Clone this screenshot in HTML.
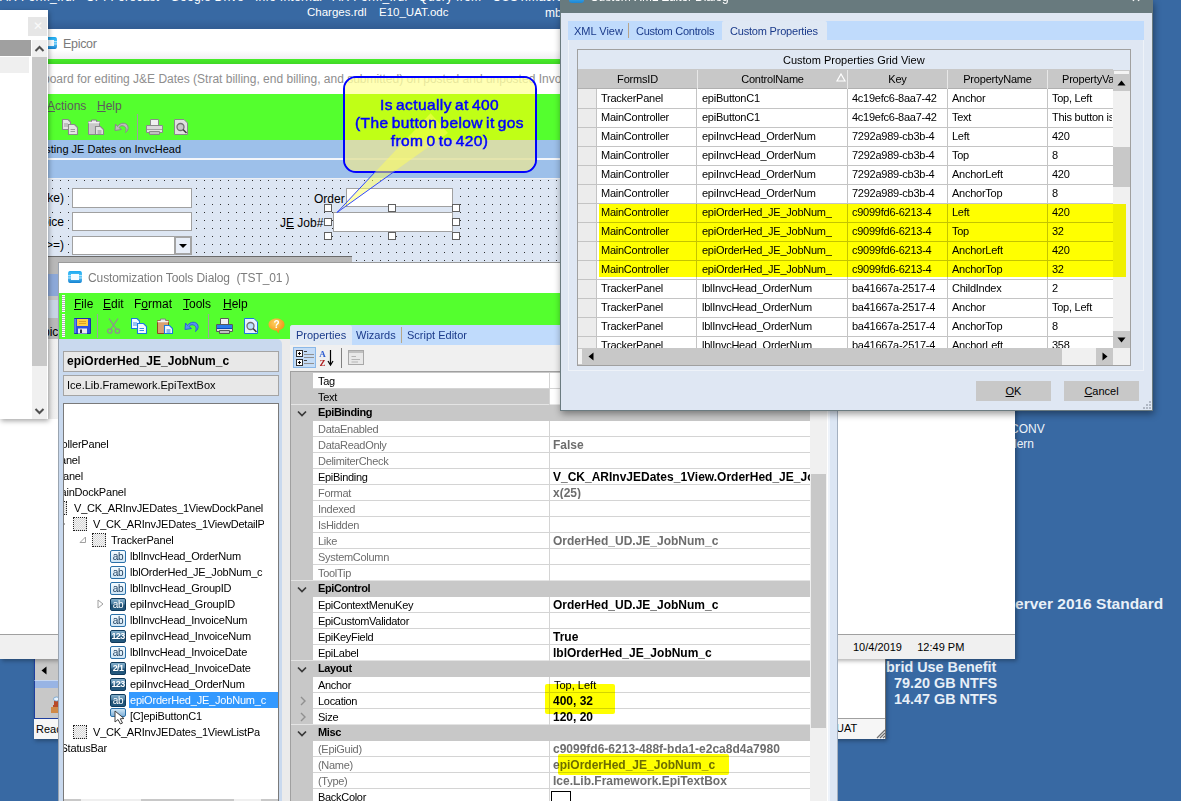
<!DOCTYPE html>
<html><head><meta charset="utf-8">
<style>
*{margin:0;padding:0;box-sizing:border-box}
html,body{width:1181px;height:801px;overflow:hidden}
body{background:#3869a3;font-family:"Liberation Sans",sans-serif;font-size:11px;color:#000;position:relative}
.a{position:absolute}
.t{position:absolute;white-space:nowrap;line-height:1}
.dots{background-image:radial-gradient(circle at 0.5px 0.5px,#303030 0.7px,transparent 0.8px);background-size:8px 8px}
</style></head><body>

<!-- desktop icon texts -->
<div class="t" style="left:0;top:-9px;color:#fff;font-size:12px;letter-spacing:0.3px">AR Form_.rdl &nbsp; CPI Forecast &nbsp; Google Drive &nbsp; Info Internal &nbsp; AR Form_.rdl &nbsp; Query from &nbsp; CUST.macro &nbsp; .mb</div>
<div class="t" style="left:307px;top:7px;color:#fff;font-size:11.5px">Charges.rdl</div>
<div class="t" style="left:379px;top:7px;color:#fff;font-size:11.5px">E10_UAT.odc</div>
<div class="t" style="left:545px;top:7px;color:#fff;font-size:12px">mb</div>

<!-- BGInfo text -->
<div class="t" style="left:1010px;top:423px;color:#eef4fa;font-size:12px">CONV</div>
<div class="t" style="left:1014px;top:438px;color:#eef4fa;font-size:12px">lern</div>
<div class="t" style="left:1004.7px;top:596px;color:#e8f0f8;font-size:15.5px;font-weight:bold">Server 2016 Standard</div>
<div class="t" style="left:867.6px;top:660px;color:#e8f0f8;font-size:14.4px;font-weight:bold">Hybrid Use Benefit</div>
<div class="t" style="left:894px;top:676px;color:#e8f0f8;font-size:14.4px;font-weight:bold">79.20 GB NTFS</div>
<div class="t" style="left:894px;top:692px;color:#e8f0f8;font-size:14.4px;font-weight:bold">14.47 GB NTFS</div>

<!-- window 2 (behind) -->
<div class="a" style="left:34px;top:600px;width:852px;height:139px;background:#fff;border:1px solid #888;box-shadow:1px 2px 4px rgba(0,0,0,.3)"></div>
<div class="a" style="left:34px;top:659px;width:24px;height:21px;background:#c8c8c8;border-left:1px solid #1f3f9f"></div><svg class="a" style="left:41px;top:666px" width="6" height="9"><path d="M5.5 0.5 V8.5 L0.5 4.5 Z" fill="#000"/></svg>
<div class="a" style="left:34px;top:680px;width:24px;height:8px;background:#98b4e4;border-left:1px solid #1f3f9f;border-top:1px solid #c8d8f0"></div>
<div class="a" style="left:34px;top:688px;width:24px;height:31px;background:#c8c8c8;border-left:1px solid #1f3f9f;border-bottom:1px solid #1f3f9f"></div><svg class="a" style="left:50px;top:694px" width="8" height="20"><path d="M4 4 L8 4 L8 18 L3 18 L3 11 L4 11 Z" fill="#b84a28"/><ellipse cx="6.5" cy="5" rx="3" ry="2" fill="#e8f4ff" stroke="#6aa0d0" stroke-width="0.8"/><path d="M1 13 H8 V19 H1 Z" fill="#d08a48"/></svg>
<div class="a" style="left:34px;top:719px;width:852px;height:20px;background:#f6f6f6"></div>
<div class="a" style="left:838px;top:718px;width:48px;height:1px;background:#a0a0a0"></div>
<div class="t" style="left:36px;top:724px;font-size:11px">Ready</div>
<div class="t" style="left:836px;top:723px;font-size:11px">UAT</div><svg class="a" style="left:875px;top:728px" width="11" height="11"><path d="M10 2 L2 10 M10 5 L5 10 M10 8 L8 10" stroke="#707070" stroke-width="1.2"/></svg><div class="a" style="left:885px;top:600px;width:1px;height:139px;background:#707070"></div>

<!-- big white window -->
<div class="a" style="left:0;top:300px;width:1015px;height:359px;background:#fff;box-shadow:2px 2px 4px rgba(0,0,0,.3)"></div>
<div class="a" style="left:0;top:634px;width:1015px;height:25px;background:#f0f0f0;border-top:1px solid #a0a0a0"></div>
<div class="t" style="left:853px;top:642px;font-size:11px">10/4/2019 &nbsp;&nbsp;&nbsp; 12:49 PM</div>

<!-- EPICOR WINDOW -->
<div class="a" style="left:40px;top:19px;width:980px;height:10px;background:linear-gradient(rgba(0,0,0,0),rgba(0,0,30,.12))"></div>
<div id="ew" class="a" style="left:0;top:0;width:1181px;height:801px;clip-path:inset(29px 166px 382px 35px)">
  <div class="a" style="left:35px;top:29px;width:1000px;height:390px;background:#fff"></div>
  
  <div class="a" style="left:35px;top:50px;width:1000px;height:9px;background:linear-gradient(#fff,#f0eef2)"></div>
  <svg class="a" style="left:42px;top:36px" width="16" height="14"><defs><linearGradient id="ig2" x1="0" y1="0" x2="0" y2="1"><stop offset="0" stop-color="#18a8f0"/><stop offset=".5" stop-color="#60c8f8"/><stop offset="1" stop-color="#1280d0"/></linearGradient></defs><path d="M3 1 H13 Q15 1 15 4 V10 Q15 13 13 13 H3 Q1 13 1 10 V4 Q1 1 3 1 Z" fill="url(#ig2)"/><rect x="4" y="4" width="8" height="6" fill="#f4fbff"/><path d="M1 5.5 H4 M1 8 H4 M12 5.5 H15 M12 8 H15" stroke="#c8ecff" stroke-width="0.8"/></svg>
  <div class="t" style="left:63px;top:38px;font-size:12.5px;color:#7a7a7a;letter-spacing:-0.3px">Epicor</div>
  <div class="a" style="left:35px;top:59px;width:1000px;height:5px;background:linear-gradient(#48ec2a,#40d826)"></div>
  <div class="t" style="left:43px;top:73px;font-size:12px;color:#8e8e8e">board for editing J&amp;E Dates (Strat billing, end billing, and submitted) on posted and unposted Invoices</div>
  <div class="a" style="left:35px;top:94px;width:1000px;height:46px;background:#54ff2e"></div>
  <div class="t" style="left:47px;top:100px;font-size:12px;color:#5c5c5c"><u>A</u>ctions</div><div class="t" style="left:97px;top:100px;font-size:12px;color:#5c5c5c"><u>H</u>elp</div>
  <div class="a" style="left:137px;top:114px;width:1px;height:26px;background:#a0a0a0"></div>
  <svg class="a" style="left:62px;top:119px" width="17" height="16"><g stroke="#8a8a8a" stroke-width="1.1" fill="#e4e4e4"><path d="M0.5 0.5 H6 L8.5 3 V10.5 H0.5 Z"/><path d="M6.5 5.5 H12.5 L15.5 8.5 V15.5 H6.5 Z"/></g><g stroke="#9a9a9a" stroke-width="1"><path d="M2 5 H6 M2 7 H6 M8.5 10.5 H13 M8.5 12.5 H13"/></g></svg><svg class="a" style="left:88px;top:119px" width="17" height="16"><path d="M0.5 2.5 H11.5 V15.5 H0.5 Z" fill="#c8c8c8" stroke="#8a8a8a" stroke-width="1"/><path d="M3.5 1 H8.5 V3.5 H3.5 Z" fill="#e8e8e8" stroke="#808080" stroke-width="1"/><path d="M0.5 3.5 H11.5" stroke="#f0f0f0" stroke-width="1.5"/><path d="M7.5 7.5 H12.5 L15.5 10.5 V15.5 H7.5 Z" fill="#e4e4e4" stroke="#8a8a8a" stroke-width="1.1"/><path d="M9.5 12 H13.5 M9.5 14 H13.5" stroke="#8a8a8a" stroke-width="1"/></svg><svg class="a" style="left:114px;top:119px" width="16" height="16"><path d="M3.5 7.5 C6 3.5 12 3 13.8 7 C15 10 13 12.5 11.5 13.5 C12.5 11 12.5 8 9.5 7 C7.5 6.3 6 7 5 8.5 L7.5 10.5 L1 11.5 L1.5 5 Z" fill="#bdbdbd" stroke="#8a8a8a" stroke-width="1"/></svg><svg class="a" style="left:146px;top:119px" width="17" height="16"><path d="M4.5 0.5 H12.5 V6.5 H4.5 Z" fill="#f0f0f0" stroke="#8a8a8a" stroke-width="1"/><path d="M0.5 6.5 H16.5 V13.5 H0.5 Z" fill="#e0e0e0" stroke="#8a8a8a" stroke-width="1"/><path d="M1 7 H16 V10 H1 Z" fill="#d8d8d8"/><path d="M1 10 H16 V11 H1 Z" fill="#a0a0a0"/><path d="M3.5 12.5 H13.5 V15.5 H3.5 Z" fill="#c0c0c0" stroke="#8a8a8a" stroke-width="1"/></svg><svg class="a" style="left:174px;top:119px" width="16" height="16"><path d="M0.5 0.5 H10 L13.5 4 V15.5 H0.5 Z" fill="#e0e0e0" stroke="#8a8a8a" stroke-width="1"/><circle cx="6.5" cy="8" r="3.5" fill="#c8c8c8" stroke="#707070" stroke-width="1.3"/><path d="M9 10.5 L12.5 14" stroke="#404040" stroke-width="1.6"/></svg><svg class="a" style="left:45px;top:119px" width="4" height="16"><path d="M2 2 V4 M2 11 V13" stroke="#8a8a8a" stroke-width="1.5"/></svg>
  <div class="a" style="left:35px;top:140px;width:1000px;height:18px;background:#9dc0ea"></div>
  <div class="a" style="left:0;top:0;width:1181px;height:801px;clip-path:inset(140px 0 640px 48px)"><div class="t" style="left:181px;top:144px;font-size:11px;color:#000;transform:translateX(-100%)">For testing JE Dates on InvcHead</div></div>
  <div class="a" style="left:35px;top:158px;width:1000px;height:2px;background:#f4f6fa"></div>
  <div class="a" style="left:35px;top:160px;width:1000px;height:18px;background:#9dc0ea"></div>
  <div class="a dots" style="left:35px;top:178px;width:1000px;height:100px;background-color:#dde6f3;background-position:1px 2px"></div><div class="a" style="left:35px;top:178px;width:1000px;height:1px;background:#eef0f4"></div>
  <div class="t" style="left:65px;top:191px;font-size:12px;background:#dde6f3;padding:1px 1px 2px 0;transform:translateX(-100%)">Make)</div>
  <div class="t" style="left:65px;top:215px;font-size:12px;background:#dde6f3;padding:1px 1px 2px 0;transform:translateX(-100%)">Invoice</div>
  <div class="t" style="left:65px;top:238px;font-size:12px;background:#dde6f3;padding:1px 1px 2px 0;transform:translateX(-100%)">(&gt;=)</div>
  <div class="a" style="left:72px;top:188px;width:120px;height:20px;background:#fff;border:1px solid #a0a0a0"></div>
  <div class="a" style="left:72px;top:212px;width:120px;height:19px;background:#fff;border:1px solid #a0a0a0"></div>
  <div class="a" style="left:72px;top:236px;width:120px;height:19px;background:#fff;border:1px solid #a0a0a0"></div>
  <div class="a" style="left:174px;top:236px;width:18px;height:19px;background:#e8eef8;border:2px solid #a4a4a4"></div>
  <div class="a" style="left:179px;top:244px;width:0;height:0;border-left:4px solid transparent;border-right:4px solid transparent;border-top:4px solid #000"></div>
  <div class="t" style="left:313px;top:192px;font-size:12px;background:#dde6f3;padding:1px 2px 2px 1px">Order</div>
  <div class="t" style="left:279px;top:216px;font-size:12px;background:#dde6f3;padding:1px 2px 2px 1px">J<u>E</u> Job#</div>
  <div class="a" style="left:346px;top:188px;width:107px;height:19px;background:#fff;border:1px solid #a0a0a0"></div>
  <div class="a" style="left:333px;top:212px;width:120px;height:20px;background:#fff;border:1px solid #a0a0a0"></div>
  <div class="a" style="left:324px;top:204px;width:8px;height:8px;background:#fff;border:1px solid #606060"></div><div class="a" style="left:388px;top:204px;width:8px;height:8px;background:#fff;border:1px solid #606060"></div><div class="a" style="left:452px;top:204px;width:8px;height:8px;background:#fff;border:1px solid #606060"></div><div class="a" style="left:324px;top:218px;width:8px;height:8px;background:#fff;border:1px solid #606060"></div><div class="a" style="left:452px;top:218px;width:8px;height:8px;background:#fff;border:1px solid #606060"></div><div class="a" style="left:324px;top:232px;width:8px;height:8px;background:#fff;border:1px solid #606060"></div><div class="a" style="left:388px;top:232px;width:8px;height:8px;background:#fff;border:1px solid #606060"></div><div class="a" style="left:452px;top:232px;width:8px;height:8px;background:#fff;border:1px solid #606060"></div>
  <div class="a" style="left:48px;top:256px;width:304px;height:40px;background:#b8b8b8;border-top:1px solid #6a6a6a"></div>
  <div class="t" style="left:88px;top:261px;font-size:12px;color:#000">This button is 420 wide</div>
  <div class="a" style="left:35px;top:274px;width:23px;height:22px;background:#8ca8d8"></div>
  <div class="a" style="left:35px;top:296px;width:23px;height:4px;background:#c4c4c4"></div>
  <div class="a" style="left:35px;top:300px;width:23px;height:18px;background:#c8d4e4"></div>
  <div class="a" style="left:35px;top:318px;width:23px;height:21px;background:#b8b8b8"></div>
  <div class="t" style="left:35px;top:326px;font-size:12px">Epic</div>
  <div class="a" style="left:35px;top:339px;width:23px;height:80px;background:linear-gradient(90deg,#dcdcdc,#f2f2f2)"></div>
</div>

<!-- LEFT WINDOW -->
<div id="lw" class="a" style="left:0;top:10px;width:48px;height:409px;background:#fff;box-shadow:1px 2px 5px rgba(0,0,0,.35)">
  <div class="a" style="left:28px;top:7px;width:19px;height:19px;background:#e6e6e6;color:#fafafa;font-size:12px;text-align:center;line-height:19px">&#x2715;</div>
  <div class="a" style="left:0;top:30px;width:31px;height:16px;background:#a0a0a0"></div>
  <div class="a" style="left:0;top:47px;width:29px;height:16px;background:#efefef"></div>
  <div class="a" style="left:32px;top:30px;width:15px;height:17px;background:#f0f0f0"></div>
  <svg class="a" style="left:34px;top:34px" width="11" height="10"><path d="M1.5 7 L5.5 3 L9.5 7" stroke="#505050" stroke-width="2" fill="none"/></svg>
  <div class="a" style="left:32px;top:47px;width:15px;height:309px;background:#c8c8c8"></div>
  <div class="a" style="left:32px;top:356px;width:15px;height:53px;background:#f0f0f0"></div>
  <svg class="a" style="left:34px;top:396px" width="11" height="10"><path d="M1.5 3 L5.5 7 L9.5 3" stroke="#505050" stroke-width="2" fill="none"/></svg>
</div>

<!-- CUSTOMIZATION TOOLS DIALOG -->
<div id="ctd" class="a" style="left:0;top:0;width:1181px;height:801px;clip-path:inset(262px 343px 0 58px)">
  <div class="a" style="left:58px;top:262px;width:770px;height:539px;background:#ebebeb;border-left:1px solid #9aa4b0;border-right:1px solid #8a96a4"></div><div class="a" style="left:827px;top:262px;width:1px;height:539px;background:#7a848e"></div><div class="a" style="left:828px;top:262px;width:10px;height:539px;background:#dce6f4;border-left:2px solid #eef3fa;border-right:1px solid #a4b0c0"></div>
  <div class="a" style="left:58px;top:262px;width:780px;height:1px;background:#9a9a9a"></div><div class="a" style="left:59px;top:263px;width:769px;height:30px;background:#fff"></div>
  <svg class="a" style="left:67px;top:270px" width="16" height="14"><defs><linearGradient id="ig" x1="0" y1="0" x2="0" y2="1"><stop offset="0" stop-color="#18a8f0"/><stop offset=".5" stop-color="#60c8f8"/><stop offset="1" stop-color="#1280d0"/></linearGradient></defs><path d="M3 1 H13 Q15 1 15 4 V10 Q15 13 13 13 H3 Q1 13 1 10 V4 Q1 1 3 1 Z" fill="url(#ig)"/><rect x="4" y="4" width="8" height="6" fill="#f4fbff"/><path d="M1 5.5 H4 M1 8 H4 M12 5.5 H15 M12 8 H15" stroke="#c8ecff" stroke-width="0.8"/></svg>
  <div class="t" style="left:88px;top:272px;font-size:12px;color:#7c7c7c;letter-spacing:-0.1px">Customization Tools Dialog &nbsp;(TST_01 )</div>
  <div class="a" style="left:59px;top:293px;width:769px;height:46px;background:#54ff2e"></div>
  <div class="a" style="left:62px;top:295px;width:3px;height:17px;background:repeating-linear-gradient(#fff 0 1px,#b0b0b0 1px 2px)"></div>
  <div class="a" style="left:62px;top:314px;width:3px;height:23px;background:repeating-linear-gradient(#fff 0 1px,#b0b0b0 1px 2px)"></div>
  <div class="t" style="left:74px;top:298px;font-size:12px;color:#000"><u>F</u>ile</div>
  <div class="t" style="left:103px;top:298px;font-size:12px;color:#000"><u>E</u>dit</div>
  <div class="t" style="left:134px;top:298px;font-size:12px;color:#000">F<u>o</u>rmat</div>
  <div class="t" style="left:183px;top:298px;font-size:12px;color:#000"><u>T</u>ools</div>
  <div class="t" style="left:223px;top:298px;font-size:12px;color:#000"><u>H</u>elp</div>
  <div class="a" style="left:97px;top:314px;width:1px;height:24px;background:#a0a0a0"></div>
  <div class="a" style="left:208px;top:314px;width:1px;height:24px;background:#a0a0a0"></div>
  <svg class="a" style="left:74px;top:318px" width="17" height="16"><path d="M0.5 0.5 H16.5 V15.5 H0.5 Z" fill="#2a50e0" stroke="#1a30b0" stroke-width="1"/><path d="M3 1 H14 V8 H3 Z" fill="#ffd040"/><path d="M5 3.5 H12 M5 5.5 H12" stroke="#e0a020" stroke-width="1"/><path d="M4 10.5 H13 V15.5 H4 Z" fill="#e8e8f0"/><path d="M6 11.5 H8 V15 H6 Z" fill="#303050"/><path d="M1 1 V15" stroke="#8ab0ff" stroke-width="1"/></svg><svg class="a" style="left:107px;top:318px" width="14" height="16"><g stroke="#909090" stroke-width="1.3" fill="none"><path d="M2 0.5 L9.5 11.5 M11 0.5 L3.5 11.5"/><circle cx="2.8" cy="13" r="2.2"/><circle cx="10.4" cy="13" r="2.2"/></g></svg><svg class="a" style="left:131px;top:318px" width="17" height="16"><g stroke="#1a78e0" stroke-width="1.1" fill="#f4f9ff"><path d="M0.5 0.5 H6 L8.5 3 V10.5 H0.5 Z"/><path d="M6.5 5.5 H12.5 L15.5 8.5 V15.5 H6.5 Z"/></g><g stroke="#3a8ae8" stroke-width="1"><path d="M2 5 H6 M2 7 H6 M8.5 10.5 H13 M8.5 12.5 H13"/></g></svg><svg class="a" style="left:157px;top:318px" width="17" height="16"><path d="M0.5 2.5 H11.5 V15.5 H0.5 Z" fill="#d8a070" stroke="#8a4a20" stroke-width="1"/><path d="M3.5 1 H8.5 V3.5 H3.5 Z" fill="#e8e8e8" stroke="#808080" stroke-width="1"/><path d="M0.5 3.5 H11.5" stroke="#f0f0f0" stroke-width="1.5"/><path d="M7.5 7.5 H12.5 L15.5 10.5 V15.5 H7.5 Z" fill="#f4f9ff" stroke="#1a78e0" stroke-width="1.1"/><path d="M9.5 12 H13.5 M9.5 14 H13.5" stroke="#1a78e0" stroke-width="1"/></svg><svg class="a" style="left:184px;top:318px" width="16" height="16"><path d="M3.5 7.5 C6 3.5 12 3 13.8 7 C15 10 13 12.5 11.5 13.5 C12.5 11 12.5 8 9.5 7 C7.5 6.3 6 7 5 8.5 L7.5 10.5 L1 11.5 L1.5 5 Z" fill="#5a90f0" stroke="#2a60d8" stroke-width="1"/></svg><svg class="a" style="left:216px;top:318px" width="17" height="16"><path d="M4.5 0.5 H12.5 V6.5 H4.5 Z" fill="#f0f0f0" stroke="#5a5a5a" stroke-width="1"/><path d="M0.5 6.5 H16.5 V13.5 H0.5 Z" fill="#e0e0e0" stroke="#5a5a5a" stroke-width="1"/><path d="M1 7 H16 V10 H1 Z" fill="#2a7ae8"/><path d="M1 10 H16 V11 H1 Z" fill="#0a4ab8"/><path d="M3.5 12.5 H13.5 V15.5 H3.5 Z" fill="#c0c0c0" stroke="#5a5a5a" stroke-width="1"/></svg><svg class="a" style="left:244px;top:318px" width="16" height="16"><path d="M0.5 0.5 H10 L13.5 4 V15.5 H0.5 Z" fill="#e6f2ff" stroke="#1a78e0" stroke-width="1"/><circle cx="6.5" cy="8" r="3.5" fill="#bde0ff" stroke="#707070" stroke-width="1.3"/><path d="M9 10.5 L12.5 14" stroke="#404040" stroke-width="1.6"/></svg><svg class="a" style="left:268px;top:318px" width="17" height="16"><defs><radialGradient id="hg" cx="40%" cy="30%" r="70%"><stop offset="0" stop-color="#ffd060"/><stop offset="1" stop-color="#f09010"/></radialGradient></defs><path d="M8.5 0.5 C13 0.5 16.5 3 16.5 6.5 C16.5 9.5 14 11.5 11.5 12 L10.5 15.5 L8.5 12.5 C4 12.5 0.5 10 0.5 6.5 C0.5 3 4 0.5 8.5 0.5 Z" fill="url(#hg)"/><text x="8.5" y="10" font-family="Liberation Sans" font-weight="bold" font-size="10" fill="#fff" text-anchor="middle">?</text></svg>
  <!-- left panel -->
  <div class="a" style="left:59px;top:339px;width:223px;height:462px;background:#c9d9ee;border-top-right-radius:5px"></div>
  <div class="a" style="left:63px;top:351px;width:216px;height:21px;background:#e8e8e8;border:1px solid #a4a4a4"></div>
  <div class="t" style="left:67px;top:355px;font-size:12px;font-weight:bold">epiOrderHed_JE_JobNum_c</div>
  <div class="a" style="left:63px;top:375px;width:216px;height:21px;background:#e8e8e8;border:1px solid #a4a4a4"></div>
  <div class="t" style="left:67px;top:380px;font-size:11px">Ice.Lib.Framework.EpiTextBox</div>
  <div class="a" style="left:63px;top:403px;width:216px;height:400px;background:#fff;border:1px solid #7a7a7a"></div>
  <div id="tree" class="a" style="left:0;top:0;width:1181px;height:801px;clip-path:inset(404px 903px 2px 64px)">
  <div class="t" style="left:108.5px;top:439px;font-size:11px;letter-spacing:-0.2px;color:#000;transform:translateX(-100%)">CustomizationControllerPanel</div><div class="t" style="left:80px;top:455px;font-size:11px;letter-spacing:-0.2px;color:#000;transform:translateX(-100%)">MainPanel</div><div class="t" style="left:83px;top:471px;font-size:11px;letter-spacing:-0.2px;color:#000;transform:translateX(-100%)">TopPanel</div><div class="t" style="left:126px;top:487px;font-size:11px;letter-spacing:-0.2px;color:#000;transform:translateX(-100%)">MainDockPanel</div><div class="a" style="left:53px;top:501px;width:14px;height:14px;border:1px dotted #202020;background:repeating-conic-gradient(#d8d8d8 0 25%,#f4f4f4 0 50%) 0 0/2px 2px"></div><div class="t" style="left:74px;top:503px;font-size:11px;letter-spacing:-0.2px;color:#000">V_CK_ARInvJEDates_1ViewDockPanel</div><div class="a" style="left:73px;top:517px;width:14px;height:14px;border:1px dotted #202020;background:repeating-conic-gradient(#d8d8d8 0 25%,#f4f4f4 0 50%) 0 0/2px 2px"></div><div class="t" style="left:93px;top:519px;font-size:11px;letter-spacing:-0.2px;color:#000;width:171px;overflow:hidden">V_CK_ARInvJEDates_1ViewDetailPanel</div><div class="a" style="left:92px;top:533px;width:14px;height:14px;border:1px dotted #202020;background:repeating-conic-gradient(#d8d8d8 0 25%,#f4f4f4 0 50%) 0 0/2px 2px"></div><div class="t" style="left:111px;top:535px;font-size:11px;letter-spacing:-0.2px;color:#000">TrackerPanel</div><div class="a" style="left:110px;top:550px;width:16px;height:13px;border:1px solid #2a70a8;border-radius:2px;background:linear-gradient(#f4fbff,#cfe6f6);color:#1a3a5a;font-size:10px;line-height:11px;text-align:center;letter-spacing:-0.3px">ab</div><div class="t" style="left:130px;top:551px;font-size:11px;letter-spacing:-0.2px;color:#000">lblInvcHead_OrderNum</div><div class="a" style="left:110px;top:566px;width:16px;height:13px;border:1px solid #2a70a8;border-radius:2px;background:linear-gradient(#f4fbff,#cfe6f6);color:#1a3a5a;font-size:10px;line-height:11px;text-align:center;letter-spacing:-0.3px">ab</div><div class="t" style="left:130px;top:567px;font-size:11px;letter-spacing:-0.2px;color:#000">lblOrderHed_JE_JobNum_c</div><div class="a" style="left:110px;top:582px;width:16px;height:13px;border:1px solid #2a70a8;border-radius:2px;background:linear-gradient(#f4fbff,#cfe6f6);color:#1a3a5a;font-size:10px;line-height:11px;text-align:center;letter-spacing:-0.3px">ab</div><div class="t" style="left:130px;top:583px;font-size:11px;letter-spacing:-0.2px;color:#000">lblInvcHead_GroupID</div><div class="a" style="left:110px;top:598px;width:16px;height:13px;border:1px solid #0e3a5c;border-radius:2px;background:linear-gradient(#84b0cc,#4a7ca0 45%,#1e4e70 55%,#245a80);color:#fff;font-size:10px;line-height:11px;text-align:center;letter-spacing:-0.3px">ab</div><div class="t" style="left:130px;top:599px;font-size:11px;letter-spacing:-0.2px;color:#000">epiInvcHead_GroupID</div><div class="a" style="left:110px;top:614px;width:16px;height:13px;border:1px solid #2a70a8;border-radius:2px;background:linear-gradient(#f4fbff,#cfe6f6);color:#1a3a5a;font-size:10px;line-height:11px;text-align:center;letter-spacing:-0.3px">ab</div><div class="t" style="left:130px;top:615px;font-size:11px;letter-spacing:-0.2px;color:#000">lblInvcHead_InvoiceNum</div><div class="a" style="left:110px;top:630px;width:16px;height:13px;border:1px solid #0e3a5c;border-radius:2px;background:linear-gradient(#84b0cc,#4a7ca0 45%,#1e4e70 55%,#245a80);color:#fff;font-size:9px;font-weight:bold;line-height:11px;text-align:center;letter-spacing:-0.6px">123</div><div class="t" style="left:130px;top:631px;font-size:11px;letter-spacing:-0.2px;color:#000">epiInvcHead_InvoiceNum</div><div class="a" style="left:110px;top:646px;width:16px;height:13px;border:1px solid #2a70a8;border-radius:2px;background:linear-gradient(#f4fbff,#cfe6f6);color:#1a3a5a;font-size:10px;line-height:11px;text-align:center;letter-spacing:-0.3px">ab</div><div class="t" style="left:130px;top:647px;font-size:11px;letter-spacing:-0.2px;color:#000">lblInvcHead_InvoiceDate</div><div class="a" style="left:110px;top:662px;width:16px;height:13px;border:1px solid #0e3a5c;border-radius:2px;background:linear-gradient(#84b0cc,#4a7ca0 45%,#1e4e70 55%,#245a80);color:#fff;font-size:9px;font-weight:bold;line-height:11px;text-align:center;letter-spacing:-0.6px">2/1</div><div class="t" style="left:130px;top:663px;font-size:11px;letter-spacing:-0.2px;color:#000">epiInvcHead_InvoiceDate</div><div class="a" style="left:110px;top:678px;width:16px;height:13px;border:1px solid #0e3a5c;border-radius:2px;background:linear-gradient(#84b0cc,#4a7ca0 45%,#1e4e70 55%,#245a80);color:#fff;font-size:9px;font-weight:bold;line-height:11px;text-align:center;letter-spacing:-0.6px">123</div><div class="t" style="left:130px;top:679px;font-size:11px;letter-spacing:-0.2px;color:#000">epiInvcHead_OrderNum</div><div class="a" style="left:129px;top:692px;width:150px;height:16px;background:#3399ff"></div><div class="a" style="left:110px;top:694px;width:16px;height:13px;border:1px solid #0e3a5c;border-radius:2px;background:linear-gradient(#84b0cc,#4a7ca0 45%,#1e4e70 55%,#245a80);color:#fff;font-size:10px;line-height:11px;text-align:center;letter-spacing:-0.3px">ab</div><div class="t" style="left:130px;top:695px;font-size:11px;letter-spacing:-0.2px;color:#fff">epiOrderHed_JE_JobNum_c</div><div class="a" style="left:110px;top:708px;width:16px;height:9px;border:1px solid #2a70a8;border-radius:2px;background:linear-gradient(#cfe6f6,#7fb0d8)"></div><svg class="a" style="left:114px;top:710px" width="14" height="15"><path d="M1 1 L1 12 L4 9.5 L6.5 14 L8.5 13 L6.3 8.8 L10 8.5 Z" fill="#fff" stroke="#404040" stroke-width="1"/></svg><div class="t" style="left:130px;top:711px;font-size:11px;letter-spacing:-0.2px;color:#000">[C]epiButtonC1</div><div class="a" style="left:73px;top:725px;width:14px;height:14px;border:1px dotted #202020;background:repeating-conic-gradient(#d8d8d8 0 25%,#f4f4f4 0 50%) 0 0/2px 2px"></div><div class="t" style="left:93px;top:727px;font-size:11px;letter-spacing:-0.2px;color:#000;width:167px;overflow:hidden">V_CK_ARInvJEDates_1ViewListPanel</div><div class="t" style="left:107px;top:743px;font-size:11px;letter-spacing:-0.2px;color:#000;transform:translateX(-100%)">StatusBar</div><svg class="a" style="left:60px;top:520px" width="8" height="8"><path d="M1 1 L1 7 L5 4 Z" fill="none" stroke="#a0a0a0"/></svg><svg class="a" style="left:79px;top:536px" width="8" height="8"><path d="M6.5 1 L6.5 6.5 L1 6.5 Z" fill="none" stroke="#a0a0a0"/></svg><svg class="a" style="left:97px;top:599px" width="8" height="10"><path d="M1 1 L1 9 L6 5 Z" fill="none" stroke="#a0a0a0"/></svg>
  </div>
  <div class="a" style="left:64px;top:799px;width:214px;height:2px;background:#c8c8c8"></div><div class="a" style="left:81px;top:799px;width:60px;height:2px;background:#efefef"></div><div class="a" style="left:234px;top:799px;width:27px;height:2px;background:#efefef"></div>
  <!-- right: tabs -->
  <div class="a" style="left:290px;top:325px;width:538px;height:20px;background:#c0dbfc;border-top-left-radius:3px"></div>
  <div class="a" style="left:290px;top:325px;width:62px;height:20px;background:#dfe9f5;border-top-left-radius:3px;border-top-right-radius:3px"></div>
  <div class="t" style="left:296px;top:330px;font-size:11px;color:#1a3a8a">Properties</div>
  <div class="t" style="left:356px;top:330px;font-size:11px;color:#1a3a8a">Wizards</div>
  <div class="a" style="left:401px;top:327px;width:1px;height:16px;background:#b8a888"></div>
  <div class="t" style="left:407px;top:330px;font-size:11px;color:#1a3a8a">Script Editor</div>
  <div class="a" style="left:290px;top:345px;width:538px;height:26px;background:#f0f0f0"></div>
  <div class="a" style="left:293px;top:347px;width:23px;height:21px;background:#c4dcf6;border:1px solid #8ab8e8"></div><svg class="a" style="left:295px;top:349px" width="20" height="18"><g fill="#fff" stroke="#303030" stroke-width="1"><rect x="1.5" y="1.5" width="6" height="6"/><rect x="1.5" y="10.5" width="6" height="6"/></g><path d="M3 4.5 H6 M4.5 3 V6 M3 13.5 H6 M4.5 12 V15" stroke="#000" stroke-width="1"/><g stroke="#909090" stroke-width="1"><path d="M9 2.5 H12 M9 5.5 H19 M9 8.5 H19 M9 11.5 H12 M9 14.5 H19"/></g><path d="M9 2.5 H12 M9 11.5 H12" stroke="#404040" stroke-width="1"/></svg>
  <svg class="a" style="left:318px;top:349px" width="18" height="18"><text x="4.5" y="8" font-family="Liberation Serif" font-weight="bold" font-size="9" fill="#2a5ad0" text-anchor="middle">A</text><text x="4.5" y="16.5" font-family="Liberation Serif" font-weight="bold" font-size="9" fill="#b02020" text-anchor="middle">Z</text><path d="M12.5 1 V15" stroke="#000" stroke-width="1.2"/><path d="M10 12 L12.5 16 L15 12" stroke="#000" stroke-width="1.2" fill="none"/></svg>
  <div class="a" style="left:341px;top:348px;width:1px;height:20px;background:#808080"></div>
  <svg class="a" style="left:348px;top:350px" width="17" height="16"><rect x="0.5" y="0.5" width="15" height="14" fill="#e8e8e8" stroke="#a8a8a8"/><rect x="1" y="1" width="14" height="2" fill="#c0c0c0"/><path d="M3.5 6.5 H8 M3.5 9.5 H12 M3.5 12 H10" stroke="#b4b4b4"/></svg>
  <!-- property grid -->
<!--PG-->
<div class="a" style="left:290px;top:371px;width:538px;height:430px;background:#fff"></div><div class="a" style="left:290px;top:371px;width:520px;height:1px;background:#a0a0a0"></div><div class="a" style="left:290px;top:371px;width:1px;height:430px;background:#a0a0a0"></div><div class="a" style="left:291px;top:372px;width:22px;height:429px;background:#c8c8c8"></div><div class="a" style="left:313px;top:372px;width:497px;height:1px;background:#c8c8c8"></div><div class="a" style="left:313px;top:373px;width:236px;height:15px;background:#fff"></div><div class="a" style="left:313px;top:388px;width:497px;height:1px;background:#d4d4d4"></div><div class="t" style="left:318px;top:376px;font-size:11px;color:#000;letter-spacing:-0.3px">Tag</div><div class="a" style="left:313px;top:389px;width:236px;height:15px;background:#c8c8c8"></div><div class="a" style="left:313px;top:404px;width:497px;height:1px;background:#d4d4d4"></div><div class="t" style="left:318px;top:392px;font-size:11px;color:#000;letter-spacing:-0.3px">Text</div><div class="a" style="left:291px;top:404px;width:519px;height:1px;background:#e4e4e4"></div><div class="a" style="left:291px;top:405px;width:519px;height:16px;background:#c8c8c8"></div><svg class="a" style="left:297px;top:410px" width="10" height="8"><path d="M1 1.5 L5 5.5 L9 1.5" stroke="#383838" stroke-width="1.7" fill="none"/></svg><div class="t" style="left:318px;top:407px;font-size:11px;font-weight:bold;letter-spacing:-0.4px">EpiBinding</div><div class="a" style="left:313px;top:421px;width:236px;height:15px;background:#fff"></div><div class="a" style="left:313px;top:436px;width:497px;height:1px;background:#d4d4d4"></div><div class="t" style="left:318px;top:424px;font-size:11px;color:#6d6d6d;letter-spacing:-0.3px">DataEnabled</div><div class="a" style="left:313px;top:437px;width:236px;height:15px;background:#fff"></div><div class="a" style="left:313px;top:452px;width:497px;height:1px;background:#d4d4d4"></div><div class="t" style="left:318px;top:440px;font-size:11px;color:#6d6d6d;letter-spacing:-0.3px">DataReadOnly</div><div class="t" style="left:553px;top:439px;width:257px;overflow:hidden;font-size:12px;font-weight:bold;color:#6d6d6d">False</div><div class="a" style="left:313px;top:453px;width:236px;height:15px;background:#fff"></div><div class="a" style="left:313px;top:468px;width:497px;height:1px;background:#d4d4d4"></div><div class="t" style="left:318px;top:456px;font-size:11px;color:#6d6d6d;letter-spacing:-0.3px">DelimiterCheck</div><div class="a" style="left:313px;top:469px;width:236px;height:15px;background:#fff"></div><div class="a" style="left:313px;top:484px;width:497px;height:1px;background:#d4d4d4"></div><div class="t" style="left:318px;top:472px;font-size:11px;color:#000;letter-spacing:-0.3px">EpiBinding</div><div class="t" style="left:553px;top:471px;width:257px;overflow:hidden;font-size:12px;font-weight:bold;color:#000">V_CK_ARInvJEDates_1View.OrderHed_JE_JobNum_c</div><div class="a" style="left:313px;top:485px;width:236px;height:15px;background:#fff"></div><div class="a" style="left:313px;top:500px;width:497px;height:1px;background:#d4d4d4"></div><div class="t" style="left:318px;top:488px;font-size:11px;color:#6d6d6d;letter-spacing:-0.3px">Format</div><div class="t" style="left:553px;top:487px;width:257px;overflow:hidden;font-size:12px;font-weight:bold;color:#6d6d6d">x(25)</div><div class="a" style="left:313px;top:501px;width:236px;height:15px;background:#fff"></div><div class="a" style="left:313px;top:516px;width:497px;height:1px;background:#d4d4d4"></div><div class="t" style="left:318px;top:504px;font-size:11px;color:#6d6d6d;letter-spacing:-0.3px">Indexed</div><div class="a" style="left:313px;top:517px;width:236px;height:15px;background:#fff"></div><div class="a" style="left:313px;top:532px;width:497px;height:1px;background:#d4d4d4"></div><div class="t" style="left:318px;top:520px;font-size:11px;color:#6d6d6d;letter-spacing:-0.3px">IsHidden</div><div class="a" style="left:313px;top:533px;width:236px;height:15px;background:#fff"></div><div class="a" style="left:313px;top:548px;width:497px;height:1px;background:#d4d4d4"></div><div class="t" style="left:318px;top:536px;font-size:11px;color:#6d6d6d;letter-spacing:-0.3px">Like</div><div class="t" style="left:553px;top:535px;width:257px;overflow:hidden;font-size:12px;font-weight:bold;color:#6d6d6d">OrderHed_UD.JE_JobNum_c</div><div class="a" style="left:313px;top:549px;width:236px;height:15px;background:#fff"></div><div class="a" style="left:313px;top:564px;width:497px;height:1px;background:#d4d4d4"></div><div class="t" style="left:318px;top:552px;font-size:11px;color:#6d6d6d;letter-spacing:-0.3px">SystemColumn</div><div class="a" style="left:313px;top:565px;width:236px;height:15px;background:#fff"></div><div class="a" style="left:313px;top:580px;width:497px;height:1px;background:#d4d4d4"></div><div class="t" style="left:318px;top:568px;font-size:11px;color:#6d6d6d;letter-spacing:-0.3px">ToolTip</div><div class="a" style="left:291px;top:580px;width:519px;height:1px;background:#e4e4e4"></div><div class="a" style="left:291px;top:581px;width:519px;height:16px;background:#c8c8c8"></div><svg class="a" style="left:297px;top:586px" width="10" height="8"><path d="M1 1.5 L5 5.5 L9 1.5" stroke="#383838" stroke-width="1.7" fill="none"/></svg><div class="t" style="left:318px;top:583px;font-size:11px;font-weight:bold;letter-spacing:-0.4px">EpiControl</div><div class="a" style="left:313px;top:597px;width:236px;height:15px;background:#fff"></div><div class="a" style="left:313px;top:612px;width:497px;height:1px;background:#d4d4d4"></div><div class="t" style="left:318px;top:600px;font-size:11px;color:#000;letter-spacing:-0.3px">EpiContextMenuKey</div><div class="t" style="left:553px;top:599px;width:257px;overflow:hidden;font-size:12px;font-weight:bold;color:#000">OrderHed_UD.JE_JobNum_c</div><div class="a" style="left:313px;top:613px;width:236px;height:15px;background:#fff"></div><div class="a" style="left:313px;top:628px;width:497px;height:1px;background:#d4d4d4"></div><div class="t" style="left:318px;top:616px;font-size:11px;color:#000;letter-spacing:-0.3px">EpiCustomValidator</div><div class="a" style="left:313px;top:629px;width:236px;height:15px;background:#fff"></div><div class="a" style="left:313px;top:644px;width:497px;height:1px;background:#d4d4d4"></div><div class="t" style="left:318px;top:632px;font-size:11px;color:#000;letter-spacing:-0.3px">EpiKeyField</div><div class="t" style="left:553px;top:631px;width:257px;overflow:hidden;font-size:12px;font-weight:bold;color:#000">True</div><div class="a" style="left:313px;top:645px;width:236px;height:15px;background:#fff"></div><div class="a" style="left:313px;top:660px;width:497px;height:1px;background:#d4d4d4"></div><div class="t" style="left:318px;top:648px;font-size:11px;color:#000;letter-spacing:-0.3px">EpiLabel</div><div class="t" style="left:553px;top:647px;width:257px;overflow:hidden;font-size:12px;font-weight:bold;color:#000">lblOrderHed_JE_JobNum_c</div><div class="a" style="left:291px;top:660px;width:519px;height:1px;background:#e4e4e4"></div><div class="a" style="left:291px;top:661px;width:519px;height:16px;background:#c8c8c8"></div><svg class="a" style="left:297px;top:666px" width="10" height="8"><path d="M1 1.5 L5 5.5 L9 1.5" stroke="#383838" stroke-width="1.7" fill="none"/></svg><div class="t" style="left:318px;top:663px;font-size:11px;font-weight:bold;letter-spacing:-0.4px">Layout</div><div class="a" style="left:313px;top:677px;width:236px;height:15px;background:#fff"></div><div class="a" style="left:313px;top:692px;width:497px;height:1px;background:#d4d4d4"></div><div class="t" style="left:318px;top:680px;font-size:11px;color:#000;letter-spacing:-0.3px">Anchor</div><div class="t" style="left:554px;top:680px;font-size:11px;color:#000">Top, Left</div><div class="a" style="left:313px;top:693px;width:236px;height:15px;background:#fff"></div><div class="a" style="left:313px;top:708px;width:497px;height:1px;background:#d4d4d4"></div><svg class="a" style="left:299px;top:696px" width="8" height="10"><path d="M2 1 L6 5 L2 9" stroke="#909090" stroke-width="1.4" fill="none"/></svg><div class="t" style="left:318px;top:696px;font-size:11px;color:#000;letter-spacing:-0.3px">Location</div><div class="t" style="left:553px;top:695px;width:257px;overflow:hidden;font-size:12px;font-weight:bold;color:#000">400, 32</div><div class="a" style="left:313px;top:709px;width:236px;height:15px;background:#fff"></div><div class="a" style="left:313px;top:724px;width:497px;height:1px;background:#d4d4d4"></div><svg class="a" style="left:299px;top:712px" width="8" height="10"><path d="M2 1 L6 5 L2 9" stroke="#909090" stroke-width="1.4" fill="none"/></svg><div class="t" style="left:318px;top:712px;font-size:11px;color:#000;letter-spacing:-0.3px">Size</div><div class="t" style="left:553px;top:711px;width:257px;overflow:hidden;font-size:12px;font-weight:bold;color:#000">120, 20</div><div class="a" style="left:291px;top:724px;width:519px;height:1px;background:#e4e4e4"></div><div class="a" style="left:291px;top:725px;width:519px;height:16px;background:#c8c8c8"></div><svg class="a" style="left:297px;top:730px" width="10" height="8"><path d="M1 1.5 L5 5.5 L9 1.5" stroke="#383838" stroke-width="1.7" fill="none"/></svg><div class="t" style="left:318px;top:727px;font-size:11px;font-weight:bold;letter-spacing:-0.4px">Misc</div><div class="a" style="left:313px;top:741px;width:236px;height:15px;background:#fff"></div><div class="a" style="left:313px;top:756px;width:497px;height:1px;background:#d4d4d4"></div><div class="t" style="left:318px;top:744px;font-size:11px;color:#6d6d6d;letter-spacing:-0.3px">(EpiGuid)</div><div class="t" style="left:553px;top:743px;width:257px;overflow:hidden;font-size:12px;font-weight:bold;color:#6d6d6d">c9099fd6-6213-488f-bda1-e2ca8d4a7980</div><div class="a" style="left:313px;top:757px;width:236px;height:15px;background:#fff"></div><div class="a" style="left:313px;top:772px;width:497px;height:1px;background:#d4d4d4"></div><div class="t" style="left:318px;top:760px;font-size:11px;color:#6d6d6d;letter-spacing:-0.3px">(Name)</div><div class="t" style="left:553px;top:759px;width:257px;overflow:hidden;font-size:12px;font-weight:bold;color:#6d6d6d">epiOrderHed_JE_JobNum_c</div><div class="a" style="left:313px;top:773px;width:236px;height:15px;background:#fff"></div><div class="a" style="left:313px;top:788px;width:497px;height:1px;background:#d4d4d4"></div><div class="t" style="left:318px;top:776px;font-size:11px;color:#6d6d6d;letter-spacing:-0.3px">(Type)</div><div class="t" style="left:553px;top:775px;width:257px;overflow:hidden;font-size:12px;font-weight:bold;color:#6d6d6d">Ice.Lib.Framework.EpiTextBox</div><div class="a" style="left:313px;top:789px;width:236px;height:15px;background:#fff"></div><div class="a" style="left:313px;top:804px;width:497px;height:1px;background:#d4d4d4"></div><div class="t" style="left:318px;top:792px;font-size:11px;color:#000;letter-spacing:-0.3px">BackColor</div><div class="a" style="left:551px;top:791px;width:20px;height:14px;background:#fff;border:1px solid #000"></div><div class="a" style="left:549px;top:373px;width:1px;height:16px;background:#d4d4d4"></div><div class="a" style="left:549px;top:389px;width:1px;height:16px;background:#d4d4d4"></div><div class="a" style="left:549px;top:421px;width:1px;height:16px;background:#d4d4d4"></div><div class="a" style="left:549px;top:437px;width:1px;height:16px;background:#d4d4d4"></div><div class="a" style="left:549px;top:453px;width:1px;height:16px;background:#d4d4d4"></div><div class="a" style="left:549px;top:469px;width:1px;height:16px;background:#d4d4d4"></div><div class="a" style="left:549px;top:485px;width:1px;height:16px;background:#d4d4d4"></div><div class="a" style="left:549px;top:501px;width:1px;height:16px;background:#d4d4d4"></div><div class="a" style="left:549px;top:517px;width:1px;height:16px;background:#d4d4d4"></div><div class="a" style="left:549px;top:533px;width:1px;height:16px;background:#d4d4d4"></div><div class="a" style="left:549px;top:549px;width:1px;height:16px;background:#d4d4d4"></div><div class="a" style="left:549px;top:565px;width:1px;height:16px;background:#d4d4d4"></div><div class="a" style="left:549px;top:597px;width:1px;height:16px;background:#d4d4d4"></div><div class="a" style="left:549px;top:613px;width:1px;height:16px;background:#d4d4d4"></div><div class="a" style="left:549px;top:629px;width:1px;height:16px;background:#d4d4d4"></div><div class="a" style="left:549px;top:645px;width:1px;height:16px;background:#d4d4d4"></div><div class="a" style="left:549px;top:677px;width:1px;height:16px;background:#d4d4d4"></div><div class="a" style="left:549px;top:693px;width:1px;height:16px;background:#d4d4d4"></div><div class="a" style="left:549px;top:709px;width:1px;height:16px;background:#d4d4d4"></div><div class="a" style="left:549px;top:741px;width:1px;height:16px;background:#d4d4d4"></div><div class="a" style="left:549px;top:757px;width:1px;height:16px;background:#d4d4d4"></div><div class="a" style="left:549px;top:773px;width:1px;height:16px;background:#d4d4d4"></div><div class="a" style="left:549px;top:789px;width:1px;height:16px;background:#d4d4d4"></div><div class="a" style="left:810px;top:371px;width:17px;height:430px;background:#f0f0f0"></div><div class="a" style="left:811px;top:474px;width:15px;height:254px;background:#c8c8c8"></div><div class="a" style="left:545px;top:684px;width:70px;height:30px;background:#ffff00;mix-blend-mode:multiply;border-radius:2px"></div><div class="a" style="left:558px;top:754px;width:171px;height:21px;background:#ffff00;mix-blend-mode:multiply;border-radius:2px"></div>
<!--/PG-->
</div>

<!-- XML DIALOG -->
<div class="a" style="left:560px;top:0;width:593px;height:411px;box-shadow:1px 3px 7px rgba(0,0,0,.4)"></div>
<div id="xd" class="a" style="left:0;top:0;width:1181px;height:801px;clip-path:inset(0 28px 390px 560px)">
  <div class="a" style="left:560px;top:0;width:593px;height:411px;background:#dfe7f3;border:1px solid #6b7b80;border-top:none"></div>
  <div class="a" style="left:560px;top:0;width:593px;height:13px;background:#687a7e"></div>
  <div class="a" style="left:569px;top:-8px;width:15px;height:11px;border-radius:3px;background:linear-gradient(#6cc8f4,#1a86d6)"></div>
  <div class="t" style="left:590px;top:-9px;font-size:12px;color:#fff;letter-spacing:-0.1px">Custom XML Editor Dialog</div>
  <div class="t" style="left:1131px;top:-8px;font-size:12px;color:#fff">&#x2715;</div>
  <div class="a" style="left:568px;top:40px;width:576px;height:331px;border:1px solid #eef2f8;border-top:none"></div>
  <div class="a" style="left:568px;top:21px;width:576px;height:19px;background:#c0dbfc"></div>
  <div class="a" style="left:722px;top:21px;width:105px;height:19px;background:#dfe8f4;border-top-left-radius:2px;border-top-right-radius:2px"></div>
  <div class="t" style="left:574px;top:26px;font-size:11px;color:#1a3a8a">XML View</div>
  <div class="a" style="left:628px;top:23px;width:1px;height:15px;background:#b8a48a"></div>
  <div class="t" style="left:636px;top:26px;font-size:11px;color:#1a3a8a;letter-spacing:-0.25px">Custom Controls</div>
  <div class="t" style="left:730px;top:26px;font-size:11px;color:#1a3a8a;letter-spacing:-0.2px">Custom Properties</div>
  <div class="a" style="left:577px;top:49px;width:554px;height:317px;background:#e0e8f3;border:1px solid #a0a0a0"></div>
  <div class="t" style="left:783px;top:55px;font-size:11px">Custom Properties Grid View</div>
  <div class="a" style="left:578px;top:69px;width:535px;height:20px;background:#c8c8c8;border-bottom:1px solid #b0b0b0"></div><div class="t" style="left:578px;top:74px;width:119px;text-align:center;font-size:11px;letter-spacing:-0.2px">FormsID</div><div class="a" style="left:697px;top:70px;width:1px;height:19px;background:#e8e8e8"></div><div class="t" style="left:698px;top:74px;width:149px;text-align:center;font-size:11px;letter-spacing:-0.2px">ControlName</div><div class="a" style="left:847px;top:70px;width:1px;height:19px;background:#e8e8e8"></div><div class="t" style="left:848px;top:74px;width:99px;text-align:center;font-size:11px;letter-spacing:-0.2px">Key</div><div class="a" style="left:947px;top:70px;width:1px;height:19px;background:#e8e8e8"></div><div class="t" style="left:948px;top:74px;width:99px;text-align:center;font-size:11px;letter-spacing:-0.2px">PropertyName</div><div class="a" style="left:1047px;top:70px;width:1px;height:19px;background:#e8e8e8"></div><div class="a" style="left:0;top:0;width:1181px;height:801px;clip-path:inset(70px 68px 712px 1048px)"><div class="t" style="left:1062px;top:74px;font-size:11px;letter-spacing:-0.2px">PropertyValue</div></div><svg class="a" style="left:836px;top:73px" width="10" height="9"><path d="M5 1 L9 8 L1 8 Z" fill="none" stroke="#fff" stroke-width="1.2"/></svg>
  <div class="a" style="left:578px;top:89px;width:535px;height:259px;background:#fff"></div><div class="a" style="left:578px;top:89px;width:18px;height:259px;background:#ececec"></div><div class="a" style="left:578px;top:108px;width:535px;height:1px;background:#c4c4c4"></div><div class="t" style="left:601px;top:93px;width:95px;overflow:hidden;font-size:11px;letter-spacing:-0.25px">TrackerPanel</div><div class="t" style="left:702px;top:93px;width:144px;overflow:hidden;font-size:11px;letter-spacing:-0.25px">epiButtonC1</div><div class="t" style="left:852px;top:93px;width:94px;overflow:hidden;font-size:11px;letter-spacing:-0.25px">4c19efc6-8aa7-42</div><div class="t" style="left:952px;top:93px;width:94px;overflow:hidden;font-size:11px;letter-spacing:-0.25px">Anchor</div><div class="t" style="left:1052px;top:93px;width:60px;overflow:hidden;font-size:11px;letter-spacing:-0.25px">Top, Left</div><div class="a" style="left:578px;top:127px;width:535px;height:1px;background:#c4c4c4"></div><div class="t" style="left:601px;top:112px;width:95px;overflow:hidden;font-size:11px;letter-spacing:-0.25px">MainController</div><div class="t" style="left:702px;top:112px;width:144px;overflow:hidden;font-size:11px;letter-spacing:-0.25px">epiButtonC1</div><div class="t" style="left:852px;top:112px;width:94px;overflow:hidden;font-size:11px;letter-spacing:-0.25px">4c19efc6-8aa7-42</div><div class="t" style="left:952px;top:112px;width:94px;overflow:hidden;font-size:11px;letter-spacing:-0.25px">Text</div><div class="t" style="left:1052px;top:112px;width:60px;overflow:hidden;font-size:11px;letter-spacing:-0.25px">This button is 420 wide</div><div class="a" style="left:578px;top:146px;width:535px;height:1px;background:#c4c4c4"></div><div class="t" style="left:601px;top:131px;width:95px;overflow:hidden;font-size:11px;letter-spacing:-0.25px">MainController</div><div class="t" style="left:702px;top:131px;width:144px;overflow:hidden;font-size:11px;letter-spacing:-0.25px">epiInvcHead_OrderNum</div><div class="t" style="left:852px;top:131px;width:94px;overflow:hidden;font-size:11px;letter-spacing:-0.25px">7292a989-cb3b-4</div><div class="t" style="left:952px;top:131px;width:94px;overflow:hidden;font-size:11px;letter-spacing:-0.25px">Left</div><div class="t" style="left:1052px;top:131px;width:60px;overflow:hidden;font-size:11px;letter-spacing:-0.25px">420</div><div class="a" style="left:578px;top:165px;width:535px;height:1px;background:#c4c4c4"></div><div class="t" style="left:601px;top:150px;width:95px;overflow:hidden;font-size:11px;letter-spacing:-0.25px">MainController</div><div class="t" style="left:702px;top:150px;width:144px;overflow:hidden;font-size:11px;letter-spacing:-0.25px">epiInvcHead_OrderNum</div><div class="t" style="left:852px;top:150px;width:94px;overflow:hidden;font-size:11px;letter-spacing:-0.25px">7292a989-cb3b-4</div><div class="t" style="left:952px;top:150px;width:94px;overflow:hidden;font-size:11px;letter-spacing:-0.25px">Top</div><div class="t" style="left:1052px;top:150px;width:60px;overflow:hidden;font-size:11px;letter-spacing:-0.25px">8</div><div class="a" style="left:578px;top:184px;width:535px;height:1px;background:#c4c4c4"></div><div class="t" style="left:601px;top:169px;width:95px;overflow:hidden;font-size:11px;letter-spacing:-0.25px">MainController</div><div class="t" style="left:702px;top:169px;width:144px;overflow:hidden;font-size:11px;letter-spacing:-0.25px">epiInvcHead_OrderNum</div><div class="t" style="left:852px;top:169px;width:94px;overflow:hidden;font-size:11px;letter-spacing:-0.25px">7292a989-cb3b-4</div><div class="t" style="left:952px;top:169px;width:94px;overflow:hidden;font-size:11px;letter-spacing:-0.25px">AnchorLeft</div><div class="t" style="left:1052px;top:169px;width:60px;overflow:hidden;font-size:11px;letter-spacing:-0.25px">420</div><div class="a" style="left:578px;top:203px;width:535px;height:1px;background:#c4c4c4"></div><div class="t" style="left:601px;top:188px;width:95px;overflow:hidden;font-size:11px;letter-spacing:-0.25px">MainController</div><div class="t" style="left:702px;top:188px;width:144px;overflow:hidden;font-size:11px;letter-spacing:-0.25px">epiInvcHead_OrderNum</div><div class="t" style="left:852px;top:188px;width:94px;overflow:hidden;font-size:11px;letter-spacing:-0.25px">7292a989-cb3b-4</div><div class="t" style="left:952px;top:188px;width:94px;overflow:hidden;font-size:11px;letter-spacing:-0.25px">AnchorTop</div><div class="t" style="left:1052px;top:188px;width:60px;overflow:hidden;font-size:11px;letter-spacing:-0.25px">8</div><div class="a" style="left:578px;top:222px;width:535px;height:1px;background:#c4c4c4"></div><div class="t" style="left:601px;top:207px;width:95px;overflow:hidden;font-size:11px;letter-spacing:-0.25px">MainController</div><div class="t" style="left:702px;top:207px;width:144px;overflow:hidden;font-size:11px;letter-spacing:-0.25px">epiOrderHed_JE_JobNum_</div><div class="t" style="left:852px;top:207px;width:94px;overflow:hidden;font-size:11px;letter-spacing:-0.25px">c9099fd6-6213-4</div><div class="t" style="left:952px;top:207px;width:94px;overflow:hidden;font-size:11px;letter-spacing:-0.25px">Left</div><div class="t" style="left:1052px;top:207px;width:60px;overflow:hidden;font-size:11px;letter-spacing:-0.25px">420</div><div class="a" style="left:578px;top:241px;width:535px;height:1px;background:#c4c4c4"></div><div class="t" style="left:601px;top:226px;width:95px;overflow:hidden;font-size:11px;letter-spacing:-0.25px">MainController</div><div class="t" style="left:702px;top:226px;width:144px;overflow:hidden;font-size:11px;letter-spacing:-0.25px">epiOrderHed_JE_JobNum_</div><div class="t" style="left:852px;top:226px;width:94px;overflow:hidden;font-size:11px;letter-spacing:-0.25px">c9099fd6-6213-4</div><div class="t" style="left:952px;top:226px;width:94px;overflow:hidden;font-size:11px;letter-spacing:-0.25px">Top</div><div class="t" style="left:1052px;top:226px;width:60px;overflow:hidden;font-size:11px;letter-spacing:-0.25px">32</div><div class="a" style="left:578px;top:260px;width:535px;height:1px;background:#c4c4c4"></div><div class="t" style="left:601px;top:245px;width:95px;overflow:hidden;font-size:11px;letter-spacing:-0.25px">MainController</div><div class="t" style="left:702px;top:245px;width:144px;overflow:hidden;font-size:11px;letter-spacing:-0.25px">epiOrderHed_JE_JobNum_</div><div class="t" style="left:852px;top:245px;width:94px;overflow:hidden;font-size:11px;letter-spacing:-0.25px">c9099fd6-6213-4</div><div class="t" style="left:952px;top:245px;width:94px;overflow:hidden;font-size:11px;letter-spacing:-0.25px">AnchorLeft</div><div class="t" style="left:1052px;top:245px;width:60px;overflow:hidden;font-size:11px;letter-spacing:-0.25px">420</div><div class="a" style="left:578px;top:279px;width:535px;height:1px;background:#c4c4c4"></div><div class="t" style="left:601px;top:264px;width:95px;overflow:hidden;font-size:11px;letter-spacing:-0.25px">MainController</div><div class="t" style="left:702px;top:264px;width:144px;overflow:hidden;font-size:11px;letter-spacing:-0.25px">epiOrderHed_JE_JobNum_</div><div class="t" style="left:852px;top:264px;width:94px;overflow:hidden;font-size:11px;letter-spacing:-0.25px">c9099fd6-6213-4</div><div class="t" style="left:952px;top:264px;width:94px;overflow:hidden;font-size:11px;letter-spacing:-0.25px">AnchorTop</div><div class="t" style="left:1052px;top:264px;width:60px;overflow:hidden;font-size:11px;letter-spacing:-0.25px">32</div><div class="a" style="left:578px;top:298px;width:535px;height:1px;background:#c4c4c4"></div><div class="t" style="left:601px;top:283px;width:95px;overflow:hidden;font-size:11px;letter-spacing:-0.25px">TrackerPanel</div><div class="t" style="left:702px;top:283px;width:144px;overflow:hidden;font-size:11px;letter-spacing:-0.25px">lblInvcHead_OrderNum</div><div class="t" style="left:852px;top:283px;width:94px;overflow:hidden;font-size:11px;letter-spacing:-0.25px">ba41667a-2517-4</div><div class="t" style="left:952px;top:283px;width:94px;overflow:hidden;font-size:11px;letter-spacing:-0.25px">ChildIndex</div><div class="t" style="left:1052px;top:283px;width:60px;overflow:hidden;font-size:11px;letter-spacing:-0.25px">2</div><div class="a" style="left:578px;top:317px;width:535px;height:1px;background:#c4c4c4"></div><div class="t" style="left:601px;top:302px;width:95px;overflow:hidden;font-size:11px;letter-spacing:-0.25px">TrackerPanel</div><div class="t" style="left:702px;top:302px;width:144px;overflow:hidden;font-size:11px;letter-spacing:-0.25px">lblInvcHead_OrderNum</div><div class="t" style="left:852px;top:302px;width:94px;overflow:hidden;font-size:11px;letter-spacing:-0.25px">ba41667a-2517-4</div><div class="t" style="left:952px;top:302px;width:94px;overflow:hidden;font-size:11px;letter-spacing:-0.25px">Anchor</div><div class="t" style="left:1052px;top:302px;width:60px;overflow:hidden;font-size:11px;letter-spacing:-0.25px">Top, Left</div><div class="a" style="left:578px;top:336px;width:535px;height:1px;background:#c4c4c4"></div><div class="t" style="left:601px;top:321px;width:95px;overflow:hidden;font-size:11px;letter-spacing:-0.25px">TrackerPanel</div><div class="t" style="left:702px;top:321px;width:144px;overflow:hidden;font-size:11px;letter-spacing:-0.25px">lblInvcHead_OrderNum</div><div class="t" style="left:852px;top:321px;width:94px;overflow:hidden;font-size:11px;letter-spacing:-0.25px">ba41667a-2517-4</div><div class="t" style="left:952px;top:321px;width:94px;overflow:hidden;font-size:11px;letter-spacing:-0.25px">AnchorTop</div><div class="t" style="left:1052px;top:321px;width:60px;overflow:hidden;font-size:11px;letter-spacing:-0.25px">8</div><div class="a" style="left:578px;top:355px;width:535px;height:1px;background:#c4c4c4"></div><div class="t" style="left:601px;top:340px;width:95px;overflow:hidden;font-size:11px;letter-spacing:-0.25px">TrackerPanel</div><div class="t" style="left:702px;top:340px;width:144px;overflow:hidden;font-size:11px;letter-spacing:-0.25px">lblInvcHead_OrderNum</div><div class="t" style="left:852px;top:340px;width:94px;overflow:hidden;font-size:11px;letter-spacing:-0.25px">ba41667a-2517-4</div><div class="t" style="left:952px;top:340px;width:94px;overflow:hidden;font-size:11px;letter-spacing:-0.25px">AnchorLeft</div><div class="t" style="left:1052px;top:340px;width:60px;overflow:hidden;font-size:11px;letter-spacing:-0.25px">358</div><div class="a" style="left:596px;top:89px;width:1px;height:259px;background:#c4c4c4"></div><div class="a" style="left:696px;top:89px;width:1px;height:259px;background:#c4c4c4"></div><div class="a" style="left:847px;top:89px;width:1px;height:259px;background:#c4c4c4"></div><div class="a" style="left:947px;top:89px;width:1px;height:259px;background:#c4c4c4"></div><div class="a" style="left:1047px;top:89px;width:1px;height:259px;background:#c4c4c4"></div>
  <!-- v scrollbar -->
  <div class="a" style="left:1113px;top:70px;width:17px;height:278px;background:#f0f0f0"></div>
  <div class="a" style="left:1113px;top:70px;width:17px;height:21px;background:#c8c8c8"></div>
  <div class="a" style="left:1114px;top:71px;width:15px;height:3px;background:#f4f4f4"></div>
  <svg class="a" style="left:1117px;top:80px" width="9" height="6"><path d="M4.5 0.5 L8.5 5.5 L0.5 5.5 Z" fill="#000"/></svg>
  <div class="a" style="left:1113px;top:147px;width:17px;height:40px;background:#c8c8c8"></div>
  <div class="a" style="left:1113px;top:331px;width:17px;height:17px;background:#c8c8c8"></div>
  <svg class="a" style="left:1117px;top:337px" width="9" height="6"><path d="M0.5 0.5 L8.5 0.5 L4.5 5.5 Z" fill="#000"/></svg>
  <!-- h scrollbar -->
  <div class="a" style="left:578px;top:348px;width:535px;height:17px;background:#c8c8c8"></div>
  <div class="a" style="left:578px;top:349px;width:4px;height:15px;background:#f4f4f4"></div>
  <svg class="a" style="left:588px;top:352px" width="6" height="9"><path d="M5.5 0.5 L5.5 8.5 L0.5 4.5 Z" fill="#000"/></svg>
  <div class="a" style="left:1062px;top:348px;width:34px;height:17px;background:#f0f0f0"></div>
  <svg class="a" style="left:1102px;top:352px" width="6" height="9"><path d="M0.5 0.5 L0.5 8.5 L5.5 4.5 Z" fill="#000"/></svg>
  <div class="a" style="left:1113px;top:348px;width:17px;height:17px;background:#f0f0f0"></div>
  <!-- highlight -->
  <div class="a" style="left:599px;top:204px;width:527px;height:73px;background:#ffff00;mix-blend-mode:multiply"></div>
  <!-- buttons -->
  <div class="a" style="left:976px;top:381px;width:75px;height:20px;background:#c8c8c8;text-align:center;font-size:11px;line-height:20px"><u>O</u>K</div>
  <div class="a" style="left:1064px;top:381px;width:75px;height:20px;background:#c8c8c8;text-align:center;font-size:11px;line-height:20px"><u>C</u>ancel</div>
  <svg class="a" style="left:1142px;top:400px" width="10" height="10"><g fill="#b0b8c4"><rect x="7" y="1" width="2" height="2"/><rect x="4" y="4" width="2" height="2"/><rect x="7" y="4" width="2" height="2"/><rect x="1" y="7" width="2" height="2"/><rect x="4" y="7" width="2" height="2"/><rect x="7" y="7" width="2" height="2"/></g></svg>
</div>

<!-- CALLOUT -->
<div id="callout" class="a" style="left:343px;top:76px;width:194px;height:97px;border:2px solid #0000ff;border-radius:13px;overflow:hidden">
  <div class="a" style="left:0;top:0;width:195px;height:16px;background:rgba(255,255,160,.78)"></div>
  <div class="a" style="left:0;top:16px;width:195px;height:46px;background:rgba(200,255,20,.93)"></div>
  <div class="a" style="left:0;top:62px;width:195px;height:40px;background:rgba(225,225,160,.85)"></div>
</div>
<svg class="a" style="left:0;top:0;width:1181px;height:801px;pointer-events:none" width="1181" height="801">
  <polygon points="337,212.5 430.6,113.2 448,133" fill="rgba(255,255,90,.5)"/>
  <line x1="337" y1="212.5" x2="376" y2="171" stroke="#3048ff" stroke-width="1"/>
  <line x1="337" y1="212.5" x2="395" y2="171" stroke="#3048ff" stroke-width="1"/>
</svg>
<div class="t" style="left:342px;top:96px;width:195px;text-align:center;font-size:15.5px;line-height:18px;color:#0000ff;letter-spacing:0.4px;word-spacing:-1.5px;-webkit-text-stroke:0.5px #0000ff">Is actually at 400<br>(The button below it gos<br>from 0 to 420)</div>

</body></html>
